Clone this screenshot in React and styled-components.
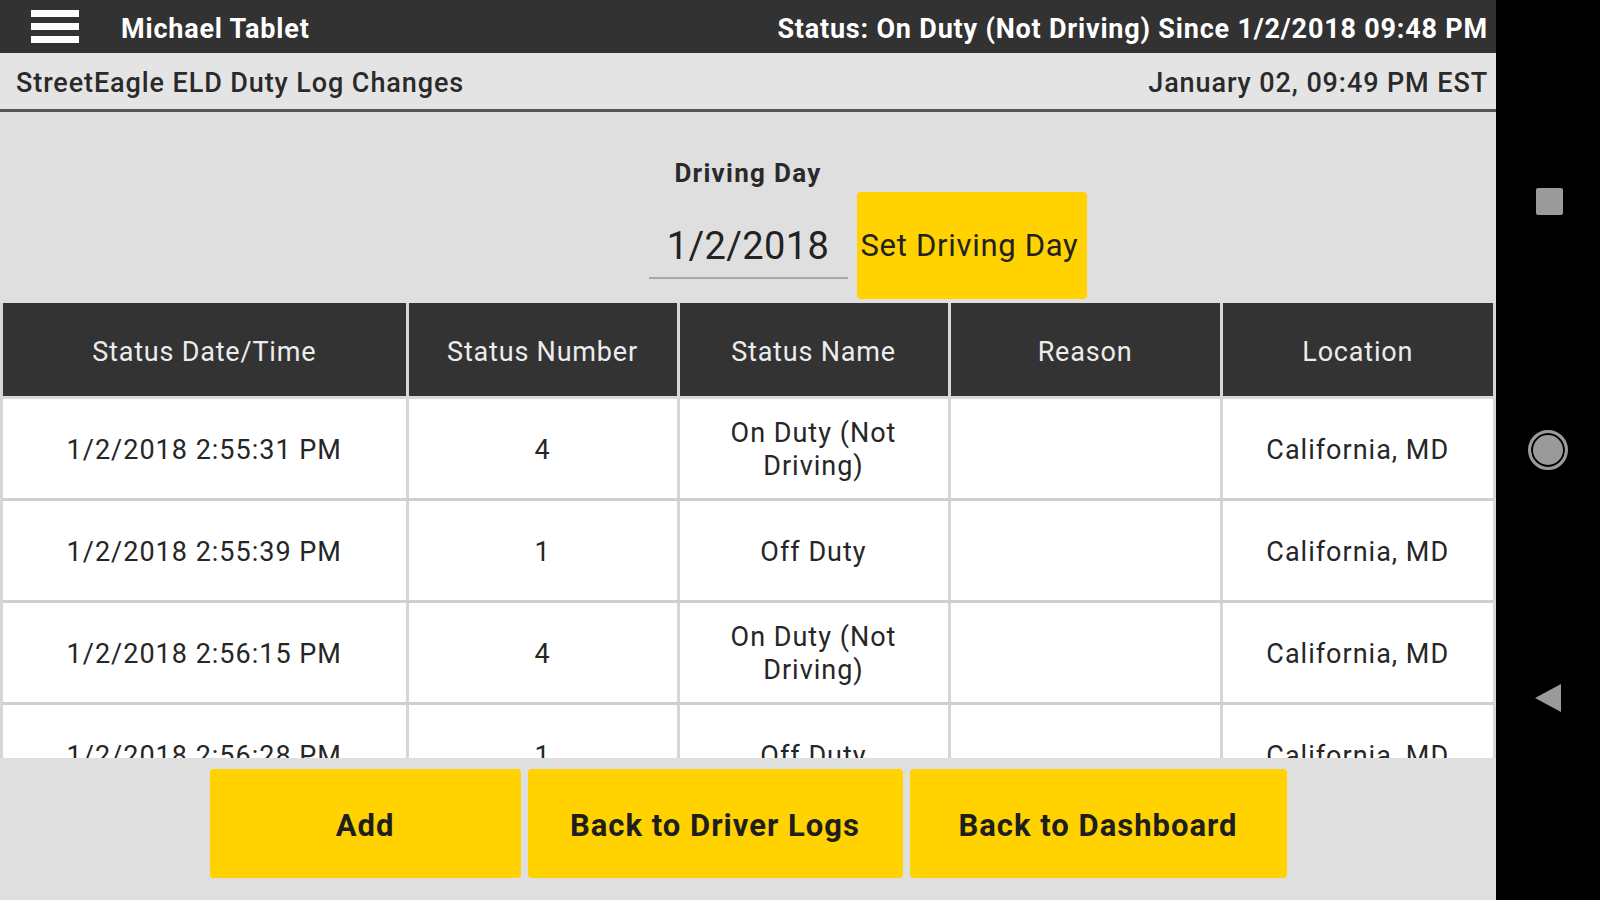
import React from 'react';
import styled, { createGlobalStyle } from 'styled-components';

const GlobalStyle = createGlobalStyle`
  html, body {
    margin: 0;
    padding: 0;
    width: 1600px;
    height: 900px;
    overflow: hidden;
    font-family: Roboto, "Noto Sans", Arial, sans-serif;
    background: #000;
  }
  * { box-sizing: border-box; }
`;

const rows = [
  { time: '1/2/2018 2:55:31 PM', number: '4', name: 'On Duty (Not Driving)', reason: '', location: 'California, MD' },
  { time: '1/2/2018 2:55:39 PM', number: '1', name: 'Off Duty', reason: '', location: 'California, MD' },
  { time: '1/2/2018 2:56:15 PM', number: '4', name: 'On Duty (Not Driving)', reason: '', location: 'California, MD' },
  { time: '1/2/2018 2:56:28 PM', number: '1', name: 'Off Duty', reason: '', location: 'California, MD' },
  { time: '1/2/2018 2:57:02 PM', number: '4', name: 'On Duty (Not Driving)', reason: '', location: 'California, MD' },
];

const columns = [
  { title: 'Status Date/Time', width: 404 },
  { title: 'Status Number', width: 271 },
  { title: 'Status Name', width: 271 },
  { title: 'Reason', width: 272 },
  { title: 'Location', width: 272 },
];

const App = () => (
  <Screen>
    <GlobalStyle />
    <Main>
      <TopBar>
        <Hamburger width="48" height="36" viewBox="0 0 48 36">
          <rect x="0" y="1" width="48" height="7" fill="#fff" />
          <rect x="0" y="14" width="48" height="7" fill="#fff" />
          <rect x="0" y="27" width="48" height="7" fill="#fff" />
        </Hamburger>
        <Title>Michael Tablet</Title>
        <Status>Status: On Duty (Not Driving) Since 1/2/2018 09:48 PM</Status>
      </TopBar>
      <SubHeader>
        <PageName>StreetEagle ELD Duty Log Changes</PageName>
        <Clock>January 02, 09:49 PM EST</Clock>
      </SubHeader>

      <DayPanel>
        <DayLabel>Driving Day</DayLabel>
        <DateInput>1/2/2018</DateInput>
        <SetButton>Set Driving Day</SetButton>
      </DayPanel>

      <TableArea>
        <LogTable>
          <colgroup>
            {columns.map((c) => (
              <col key={c.title} style={{ width: c.width }} />
            ))}
          </colgroup>
          <thead>
            <tr>
              {columns.map((c) => (
                <HeadCell key={c.title}>{c.title}</HeadCell>
              ))}
            </tr>
          </thead>
          <tbody>
            {rows.map((r, i) => (
              <tr key={i}>
                <Cell>{r.time}</Cell>
                <Cell>{r.number}</Cell>
                <Cell>{r.name}</Cell>
                <Cell>{r.reason}</Cell>
                <Cell>{r.location}</Cell>
              </tr>
            ))}
          </tbody>
        </LogTable>
      </TableArea>

      <Footer>
        <ActionButton $width={311}>Add</ActionButton>
        <ActionButton $width={375}>Back to Driver Logs</ActionButton>
        <ActionButton $width={377}>Back to Dashboard</ActionButton>
      </Footer>
    </Main>

    <NavBar>
      <NavSquare />
      <NavCircle />
      <NavBack width="28" height="30" viewBox="0 0 28 30">
        <polygon points="27,1 27,29 1,15" fill="#9a9a9a" />
      </NavBack>
    </NavBar>
  </Screen>
);

const Screen = styled.div`
  display: flex;
  width: 1600px;
  height: 900px;
`;

const Main = styled.div`
  width: 1496px;
  height: 900px;
  display: flex;
  flex-direction: column;
  background: #dfdfdf;
`;

const TopBar = styled.header`
  height: 53px;
  flex: none;
  display: flex;
  align-items: center;
  padding: 5px 8px 0 31px;
  background: #323232;
  color: #fff;
`;

const Hamburger = styled.svg`
  flex: none;
  margin-right: 42px;
  margin-top: -5px;
`;

const Title = styled.div`
  font-size: 27px;
  font-weight: 700;
  letter-spacing: 0.8px;
`;

const Status = styled.div`
  margin-left: auto;
  font-size: 27px;
  font-weight: 700;
  letter-spacing: 0.8px;
`;

const SubHeader = styled.div`
  height: 59px;
  flex: none;
  display: flex;
  align-items: center;
  justify-content: space-between;
  padding: 4px 8px 0 16px;
  background: #e4e4e4;
  border-bottom: 3px solid #555;
  color: #2a2a2a;
`;

const PageName = styled.div`
  font-size: 27px;
  font-weight: 500;
  letter-spacing: 0.9px;
`;

const Clock = styled.div`
  font-size: 27px;
  font-weight: 500;
  letter-spacing: 0.9px;
`;

const DayPanel = styled.section`
  height: 191px;
  flex: none;
  display: grid;
  grid-template-columns: 1fr 199px 1fr;
  grid-template-rows: 30px 107px;
  row-gap: 4px;
  padding-top: 46px;
  align-items: center;
`;

const DayLabel = styled.div`
  grid-column: 2;
  grid-row: 1;
  text-align: center;
  font-size: 26px;
  font-weight: 700;
  letter-spacing: 1.3px;
  color: #2a2a2a;
  white-space: nowrap;
`;

const DateInput = styled.div`
  grid-column: 2;
  grid-row: 2;
  align-self: stretch;
  display: flex;
  align-items: center;
  justify-content: center;
  padding-top: 22px;
  margin-bottom: 20px;
  border-bottom: 2px solid #a8a8a8;
  font-size: 38px;
  letter-spacing: 0.4px;
  color: #222;
`;

const SetButton = styled.button`
  grid-column: 3;
  grid-row: 2;
  justify-self: start;
  align-self: stretch;
  width: 230px;
  margin-left: 9px;
  padding: 0 4px;
  border: none;
  border-radius: 4px;
  background: #ffd200;
  color: #222;
  font-family: inherit;
  font-size: 31px;
  letter-spacing: 0.7px;
  text-align: left;
  white-space: nowrap;
  overflow: hidden;
`;

const TableArea = styled.div`
  flex: 1;
  min-height: 0;
  overflow: hidden;
  padding: 0 3px;
  background: #d6d6d6;
`;

const LogTable = styled.table`
  width: 100%;
  table-layout: fixed;
  border-collapse: collapse;
`;

const HeadCell = styled.th`
  height: 94px;
  padding-top: 6px;
  background: #333;
  color: #ececec;
  font-size: 27px;
  font-weight: 400;
  letter-spacing: 0.8px;
  border-left: 3px solid #d8d8d8;
  border-right: 3px solid #d8d8d8;
  border-bottom: 3px solid #d8d8d8;

  &:first-child { border-left: none; }
  &:last-child { border-right: none; }
`;

const Cell = styled.td`
  height: 102px;
  padding: 4px 12px 0;
  background: #fff;
  color: #262626;
  text-align: center;
  font-size: 27px;
  line-height: 33px;
  letter-spacing: 1px;
  border-left: 3px solid #d6d6d6;
  border-right: 3px solid #d6d6d6;
  border-bottom: 3px solid #cfcfcf;

  &:first-child { border-left: none; }
  &:last-child { border-right: none; }
`;

const Footer = styled.footer`
  height: 142px;
  flex: none;
  display: flex;
  justify-content: center;
  gap: 7px;
  padding: 11px 0 22px;
  background: #dfdfdf;
`;

const ActionButton = styled.button`
  width: ${(p) => p.$width}px;
  padding: 4px 0 0;
  border: none;
  border-radius: 4px;
  background: #ffd200;
  color: #1e1e1e;
  font-family: inherit;
  font-size: 31px;
  font-weight: 700;
  letter-spacing: 1px;
`;

const NavBar = styled.nav`
  width: 104px;
  height: 900px;
  background: #000;
  display: flex;
  flex-direction: column;
  align-items: center;
  padding-top: 188px;
`;

const NavSquare = styled.div`
  width: 27px;
  height: 27px;
  border-radius: 2px;
  background: #9a9a9a;
  margin-left: 2px;
`;

const NavCircle = styled.div`
  width: 40px;
  height: 40px;
  margin-top: 215px;
  border-radius: 50%;
  background: #9a9a9a;
  border: 3px solid #9a9a9a;
  box-shadow: inset 0 0 0 2px #000;
`;

const NavBack = styled.svg`
  margin-top: 213px;
`;

export default App;
